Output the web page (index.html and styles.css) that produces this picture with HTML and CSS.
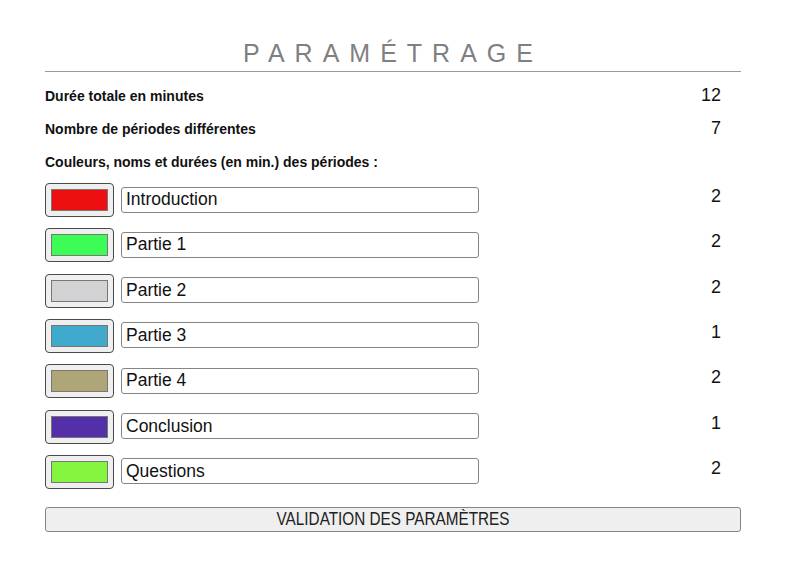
FILE: index.html
```html
<!DOCTYPE html>
<html lang="fr">
<head>
    <meta charset="utf-8">
    <title>Paramétrage</title>
    <link rel="stylesheet" href="styles.css">
</head>
<body>

<div class="page">
    <h1 class="title">PARAMÉTRAGE</h1>

    <div class="row">
        <span class="label">Durée totale en minutes</span>
        <span class="value">12</span>
    </div>
    <div class="row">
        <span class="label">Nombre de périodes différentes</span>
        <span class="value">7</span>
    </div>
    <div class="row">
        <span class="label">Couleurs, noms et durées (en min.) des périodes :</span>
    </div>

    <div class="periods">
        <div class="period">
            <button class="swatch"><span class="chip" style="background:#ec1010"></span></button>
            <input type="text" class="name" value="Introduction">
            <span class="duration">2</span>
        </div>
        <div class="period">
            <button class="swatch"><span class="chip" style="background:#3dfc56"></span></button>
            <input type="text" class="name" value="Partie 1">
            <span class="duration">2</span>
        </div>
        <div class="period">
            <button class="swatch"><span class="chip" style="background:#d2d2d4"></span></button>
            <input type="text" class="name" value="Partie 2">
            <span class="duration">2</span>
        </div>
        <div class="period">
            <button class="swatch"><span class="chip" style="background:#41aacc"></span></button>
            <input type="text" class="name" value="Partie 3">
            <span class="duration">1</span>
        </div>
        <div class="period">
            <button class="swatch"><span class="chip" style="background:#aea677"></span></button>
            <input type="text" class="name" value="Partie 4">
            <span class="duration">2</span>
        </div>
        <div class="period">
            <button class="swatch"><span class="chip" style="background:#5330a8"></span></button>
            <input type="text" class="name" value="Conclusion">
            <span class="duration">1</span>
        </div>
        <div class="period">
            <button class="swatch"><span class="chip" style="background:#84f43f"></span></button>
            <input type="text" class="name" value="Questions">
            <span class="duration">2</span>
        </div>
    </div>

    <button class="validate"><span>VALIDATION DES PARAMÈTRES</span></button>
</div>

</body>
</html>
```

FILE: styles.css
```css
body {
    margin: 0;
    background: #ffffff;
    color: #111;
    font-family: 'Liberation Sans', Arial, sans-serif;
}
.page {
    width: 696px;
    margin-left: 45px;
}
.title {
    margin: 38px 0 0;
    padding-bottom: 3px;
    border-bottom: 1px solid #9a9a9a;
    font-size: 25px;
    line-height: 30px;
    font-weight: normal;
    letter-spacing: 10px;
    text-align: center;
    color: #808080;
}
.row {
    display: flex;
    align-items: center;
    height: 33px;
}
.row:first-of-type {
    margin-top: 7px;
}
.label {
    flex: 1;
    font-size: 14px;
    font-weight: bold;
}
.value {
    padding-right: 20px;
    font-size: 18px;
}
.periods {
    display: flex;
    flex-direction: column;
    gap: 11.33px;
    margin-top: 5px;
}
.period {
    display: flex;
    align-items: center;
    height: 34px;
}
.swatch {
    width: 69px;
    height: 34px;
    padding: 5px;
    border: 1px solid #4a4a4a;
    border-radius: 4px;
    background: #efefef;
    display: flex;
}
.chip {
    flex: 1;
    border: 1px solid #777;
}
.name {
    width: 358px;
    height: 26px;
    box-sizing: border-box;
    margin: -1px 0 0 7px;
    padding: 0 4px;
    border: 1px solid #858585;
    border-radius: 3px;
    font-family: 'Liberation Sans', Arial, sans-serif;
    font-size: 17.5px;
    color: #111;
}
.duration {
    flex: 1;
    align-self: flex-start;
    padding-right: 20px;
    line-height: 26px;
    font-size: 18px;
    text-align: right;
}
.validate {
    display: block;
    width: 100%;
    height: 25px;
    margin-top: 18px;
    padding: 0;
    border: 1px solid #858585;
    border-radius: 3px;
    background: #efefef;
    color: #222;
    font-family: 'Liberation Sans', Arial, sans-serif;
    font-size: 18px;
}
.validate span {
    display: inline-block;
    transform: scaleX(0.85);
}
```
